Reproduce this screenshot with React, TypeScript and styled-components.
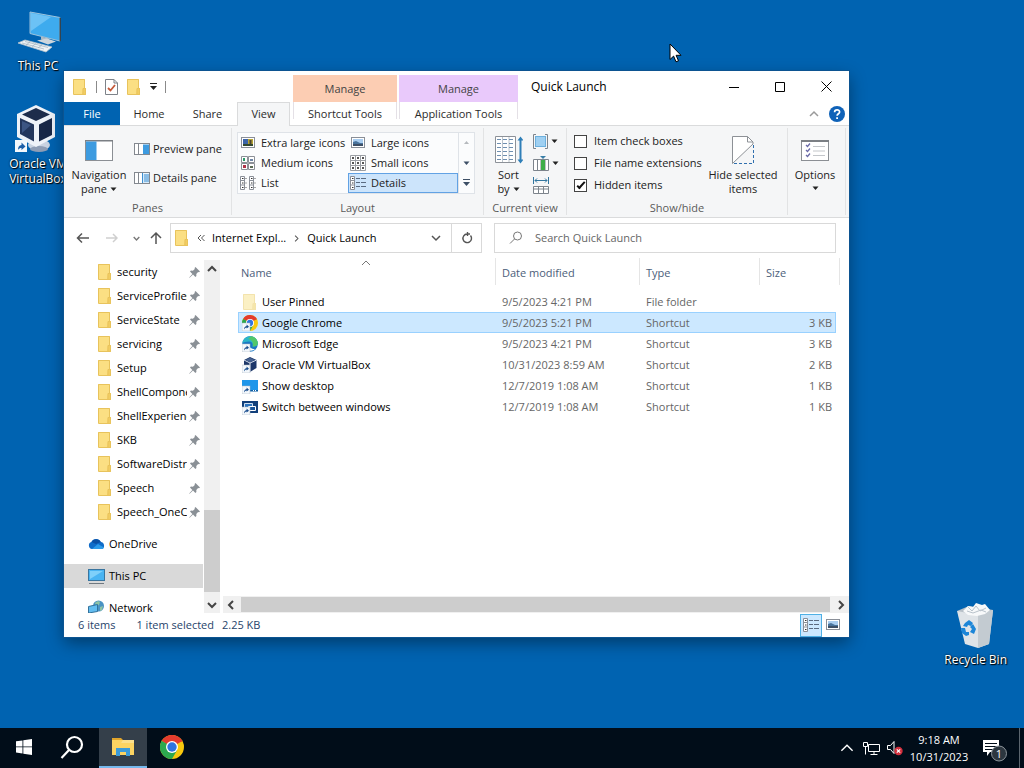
import React from "react";
import styled, { createGlobalStyle, css } from "styled-components";

const GlobalStyle = createGlobalStyle`
  *, *::before, *::after { box-sizing: border-box; }
  html, body { margin: 0; height: 100%; }
  body, button, input {
    font-family: "Open Sans", "Noto Sans", sans-serif;
    font-size: 11px;
    line-height: 16px;
  }
  svg { display: block; flex: none; }
  button { border: 0; padding: 0; margin: 0; background: none; color: inherit; white-space: nowrap; }
`;

/* ---------- desktop ---------- */

const Screen = styled.div`
  display: flex;
  flex-direction: column;
  height: 100vh;
  background: #0063b1;
  overflow: hidden;
`;

const Desktop = styled.main`
  position: relative;
  flex: 1;
  min-height: 0;
`;

const IconColumn = styled.div`
  display: flex;
  flex-direction: column;
  gap: 31px;
  width: 76px;
  padding-top: 8px;
`;

const DesktopIcon = styled.button`
  display: flex;
  flex-direction: column;
  align-items: center;
  gap: 2px;
  color: #fff;
  font-size: 12px;
  line-height: 15px;
  text-shadow: 1px 1px 1px #000, 0 0 2px #000;
`;

const BinSpot = styled.div`
  position: absolute;
  right: 17px;
  bottom: 61px;
`;

const Pointer = styled.div`
  position: absolute;
  left: 669px;
  top: 43px;
`;

/* ---------- window ---------- */

const Window = styled.section`
  position: absolute;
  left: 64px;
  top: 71px;
  right: 175px;
  bottom: 91px;
  display: flex;
  flex-direction: column;
  background: #fff;
  color: #000;
  box-shadow: 0 0 0 1px #0c5491, 0 6px 16px rgba(0, 0, 0, 0.4);
`;

const TitleBar = styled.header`
  display: flex;
  height: 31px;
  align-items: stretch;
`;

const QuickAccess = styled.div`
  display: flex;
  align-items: center;
  gap: 8px;
  width: 229px;
  padding-left: 8px;
`;

const QuickDivider = styled.span`
  width: 1px;
  height: 12px;
  background: #8a8a8a;
`;

const ContextLabel = styled.div<{ $tone: string; $width: number }>`
  width: ${(p) => p.$width}px;
  margin-top: 4px;
  margin-right: 2px;
  padding-top: 6px;
  background: ${(p) => p.$tone};
  color: #444;
  text-align: center;
`;

const WindowTitle = styled.h1`
  flex: 1;
  margin: 0;
  padding: 8px 0 0 11px;
  font-size: 12px;
  font-weight: 400;
`;

const CaptionButton = styled.button`
  display: flex;
  width: 46px;
  align-items: center;
  justify-content: center;
`;

const TabRow = styled.nav`
  display: flex;
  height: 24px;
  border-bottom: 1px solid #dadbdc;
`;

const Tab = styled.button<{ $width: number; $kind?: "file" | "active" | "context" }>`
  width: ${(p) => p.$width}px;
  height: 23px;
  padding-top: 1px;
  color: #2b2b2b;
  ${(p) =>
    p.$kind === "file" &&
    css`
      background: #0063b1;
      color: #fff;
    `}
  ${(p) =>
    p.$kind === "active" &&
    css`
      height: 24px;
      padding: 0 0 1px;
      margin-right: 3px;
      background: #f5f6f7;
      border: 1px solid #dadbdc;
      border-bottom: 0;
    `}
  ${(p) =>
    p.$kind === "context" &&
    css`
      margin-right: 2px;
      border: solid transparent;
      border-width: 0 1px;
      border-image: linear-gradient(#e4e0e6 70%, transparent 70%) 1;
    `}
`;

const TabTail = styled.div`
  display: flex;
  flex: 1;
  align-items: center;
  justify-content: flex-end;
  gap: 10px;
  padding-right: 4px;
`;

const Ribbon = styled.div`
  display: flex;
  height: 92px;
  background: #f5f6f7;
  border-bottom: 1px solid #dadbdc;
  color: #222;
`;

const Group = styled.section<{ $width: number }>`
  display: flex;
  flex-direction: column;
  width: ${(p) => p.$width}px;
  margin: 2px 0;
  border-right: 1px solid #e2e3e4;
`;

const GroupBody = styled.div`
  display: flex;
  flex: 1;
`;

const GroupName = styled.div`
  height: 14px;
  color: #5a5a5a;
  text-align: center;
  line-height: 14px;
`;

const BigButton = styled.button<{ $width: number }>`
  display: flex;
  flex-direction: column;
  align-items: center;
  width: ${(p) => p.$width}px;
  line-height: 14px;
  padding-top: 4px;
`;

const BigGlyph = styled.span`
  display: flex;
  height: 36px;
  align-items: center;
`;

const WithArrow = styled.span`
  display: flex;
  align-items: center;
  gap: 3px;
  min-height: 12px;
`;

const Stack = styled.div<{ $gap: number; $pad: number }>`
  display: flex;
  flex: none;
  flex-direction: column;
  gap: ${(p) => p.$gap}px;
  padding-top: ${(p) => p.$pad}px;
`;

const SmallButton = styled.button`
  display: flex;
  align-items: center;
  gap: 3px;
  height: 16px;
`;

const Gallery = styled.div`
  display: grid;
  grid-template-columns: 110px 110px 16px;
  grid-template-rows: repeat(3, 20px);
  margin: 4px 0 0 5px;
  height: 62px;
  border: 1px solid #dfe3e8;
  background: #fbfcfd;
`;

const GalleryItem = styled.button<{ $on?: boolean }>`
  display: flex;
  align-items: center;
  gap: 5px;
  padding-left: 1px;
  border: 1px solid ${(p) => (p.$on ? "#62a2e4" : "transparent")};
  background: ${(p) => (p.$on ? "#cce4fb" : "transparent")};
`;

const GalleryStep = styled.button`
  display: flex;
  align-items: center;
  justify-content: center;
  border-left: 1px solid #dfe3e8;
`;

const CheckLabel = styled.label`
  display: flex;
  width: 135px;
  align-items: center;
  gap: 7px;
  height: 16px;
  padding-left: 7px;
  white-space: nowrap;
`;

const CheckBox = styled.input`
  appearance: none;
  position: relative;
  flex: none;
  width: 13px;
  height: 13px;
  margin: 0;
  border: 1px solid #444;
  background: #fff;
  &:checked::after {
    content: "";
    position: absolute;
    left: 4px;
    top: 0;
    width: 4px;
    height: 9px;
    border: solid #111;
    border-width: 0 2px 2px 0;
    transform: rotate(42deg);
  }
`;

/* ---------- address row ---------- */

const AddressRow = styled.div`
  display: flex;
  align-items: center;
  height: 40px;
  padding: 0 13px;
`;

const NavButton = styled.button<{ $width: number }>`
  display: flex;
  width: ${(p) => p.$width}px;
  flex: none;
  justify-content: center;
`;

const AddressBox = styled.div`
  display: flex;
  flex: 1 1 312px;
  min-width: 0;
  align-items: center;
  height: 30px;
  margin-right: 12px;
  border: 1px solid #d9d9d9;
  padding-left: 3px;
`;

const Crumb = styled.a`
  color: #000;
  text-decoration: none;
  white-space: nowrap;
`;

const CrumbMark = styled.span`
  display: flex;
  margin: 0 7px;
`;

const AddressEnd = styled.div`
  display: flex;
  height: 28px;
  margin-left: auto;
`;

const AddressButton = styled.button`
  display: flex;
  width: 30px;
  align-items: center;
  justify-content: center;
  & + & {
    border-left: 1px solid #d9d9d9;
  }
`;

const SearchBox = styled.label`
  display: flex;
  flex: 1 1 342px;
  min-width: 0;
  align-items: center;
  gap: 12px;
  height: 30px;
  padding-left: 14px;
  border: 1px solid #d9d9d9;
`;

const SearchInput = styled.input`
  flex: 1;
  min-width: 0;
  padding: 0;
  border: 0;
  outline: 0;
  &::placeholder {
    color: #666;
    opacity: 1;
  }
`;

/* ---------- body ---------- */

const Body = styled.div`
  display: flex;
  flex: 1;
  min-height: 0;
`;

const Tree = styled.nav`
  width: 139px;
  padding-top: 2px;
  overflow: hidden;
`;

const TreeItem = styled.a<{ $root?: boolean; $on?: boolean }>`
  display: flex;
  align-items: center;
  gap: 4px;
  height: 24px;
  margin-top: ${(p) => (p.$root ? 8 : 0)}px;
  padding: 0 3px 0 ${(p) => (p.$root ? 24 : 33)}px;
  background: ${(p) => (p.$on ? "#d9d9d9" : "transparent")};
  color: #000;
  text-decoration: none;
`;

const TreeText = styled.span`
  flex: 1;
  margin-right: -2px;
  overflow: hidden;
  white-space: nowrap;
`;

const VScroll = styled.div`
  display: flex;
  flex-direction: column;
  width: 16px;
  margin: 2px 0 0 1px;
  background: #f0f0f0;
`;

const ScrollButton = styled.button`
  display: flex;
  width: 16px;
  height: 17px;
  align-items: center;
  justify-content: center;
`;

const VTrack = styled.div`
  display: flex;
  flex: 1;
  flex-direction: column;
  justify-content: flex-end;
  padding-bottom: 4px;
`;

const VThumb = styled.div`
  height: 26%;
  background: #cdcdcd;
`;

const ListPane = styled.div`
  display: flex;
  flex: 1;
  min-width: 0;
  flex-direction: column;
  margin-left: 3px;
`;

const ListArea = styled.div`
  flex: 1;
  min-height: 0;
  padding: 0 9px 0 15px;
`;

const FileTable = styled.table`
  width: 100%;
  border-spacing: 0;
  table-layout: fixed;
`;

const HeadCell = styled.th<{ $width?: number; $first?: boolean }>`
  position: relative;
  width: ${(p) => (p.$width ? `${p.$width}px` : "auto")};
  height: 27px;
  padding: ${(p) => (p.$first ? "3px 0 0 3px" : "3px 0 0 6px")};
  border-left: ${(p) => (p.$first ? "0" : "1px solid #e5e5e5")};
  color: #4c607a;
  font-weight: 400;
  text-align: left;
`;

const HeadEnd = styled.td`
  width: 4px;
  padding: 0;
  border-right: 1px solid #e5e5e5;
`;

const SortMark = styled.span`
  position: absolute;
  left: 48%;
  top: 0;
`;

const HeadGap = styled.tr`
  height: 6px;
`;

const Cell = styled.td<{ $right?: boolean }>`
  height: 21px;
  padding: 0 3px 0 7px;
  border: solid transparent;
  border-width: 1px 0;
  color: #666;
  line-height: 19px;
  text-align: ${(p) => (p.$right ? "right" : "left")};
  white-space: nowrap;
`;

const FileRow = styled.tr<{ $on?: boolean }>`
  ${Cell}:first-child {
    padding-left: 3px;
    border-left-width: 1px;
  }
  ${Cell}:nth-child(4) {
    border-right-width: 1px;
  }
  ${(p) =>
    p.$on &&
    css`
      ${Cell} {
        background: #cce8ff;
        border-color: #99d1ff;
      }
    `}
`;

const FileName = styled.span`
  display: flex;
  align-items: center;
  gap: 4px;
  color: #000;
`;

const HScroll = styled.div`
  display: flex;
  height: 17px;
  align-items: center;
  background: #f0f0f0;
`;

const HThumb = styled.div`
  flex: 1;
  height: 15px;
  background: #cdcdcd;
  margin: 0 3px 0 2px;
`;

const StatusBar = styled.footer`
  display: flex;
  height: 24px;
  align-items: center;
  padding: 0 5px 0 14px;
  color: #27436a;
`;

const StatusText = styled.span<{ $gap: number }>`
  margin-right: ${(p) => p.$gap}px;
`;

const ViewButton = styled.button<{ $on?: boolean }>`
  display: flex;
  width: 22px;
  height: 23px;
  align-items: center;
  justify-content: center;
  border: 1px solid ${(p) => (p.$on ? "#4fb0e5" : "transparent")};
  background: ${(p) => (p.$on ? "#cce8ff" : "transparent")};
`;

const Spacer = styled.div`
  flex: 1;
`;

/* ---------- taskbar ---------- */

const Taskbar = styled.footer`
  display: flex;
  height: 40px;
  background: #010d19;
  color: #fff;
`;

const TaskButton = styled.button<{ $on?: boolean }>`
  display: flex;
  width: 48px;
  align-items: center;
  justify-content: center;
  margin-left: ${(p) => (p.$on ? 3 : 0)}px;
  margin-right: ${(p) => (p.$on ? 1 : 0)}px;
  background: ${(p) => (p.$on ? "#343f4a" : "transparent")};
  border-bottom: 2px solid ${(p) => (p.$on ? "#76b9ed" : "transparent")};
`;

const TrayButton = styled.button`
  display: flex;
  width: 24px;
  align-items: center;
  justify-content: center;
`;

const Clock = styled.button`
  display: flex;
  flex-direction: column;
  width: 64px;
  align-items: center;
  justify-content: center;
  line-height: 17px;
`;

const NoticeButton = styled.button`
  display: flex;
  width: 48px;
  align-items: center;
  justify-content: center;
  padding-top: 4px;
`;

const ShowDesktop = styled.button`
  width: 5px;
  border-left: 1px solid #5b656e;
`;

/* ---------- drawings ---------- */

const Folder = ({ pale }: { pale?: boolean }) => (
  <svg width="16" height="16" viewBox="0 0 16 16">
    <path d="M1 0h12v15H1z" fill={pale ? "#fbf0c4" : "#fbdf83"} />
    <path d="M11 9h3v7h-4z" fill={pale ? "#f6e6a8" : "#f2cd62"} />
    <path d="M1.500 .5v15h12V9.500h-2.500v6M12.500 .5v9M1.500 .5h11" fill="none" stroke={pale ? "#f3e3ad" : "#e8c35c"} strokeWidth="1" />
  </svg>
);

const Chevron = ({ d, size = 10, color = "#444", weight = 1.5 }: { d: "up" | "down" | "left" | "right"; size?: number; color?: string; weight?: number }) => {
  const paths = { up: "M1 7l4-4 4 4", down: "M1 3l4 4 4-4", left: "M7 1L3 5l4 4", right: "M3 1l4 4-4 4" };
  return (
    <svg width={size} height={size} viewBox="0 0 10 10" fill="none" stroke={color} strokeWidth={weight}>
      <path d={paths[d]} />
    </svg>
  );
};

const Triangle = ({ up, bar, color = "#222" }: { up?: boolean; bar?: boolean; color?: string }) => (
  <svg width="7" height="8" viewBox="0 0 7 8" fill={color}>
    {bar && <path d="M0 0h7v1H0z" />}
    <path d={up ? "M1 5h5L3.500 2z" : bar ? "M0 3h7L3.500 7z" : "M.5 2.500h6L3.500 6z"} />
  </svg>
);

const CheckDoc = () => (
  <svg width="13" height="16" viewBox="0 0 13 16">
    <path d="M.5.5h8.500l3.500 3.500v11.500H.5z" fill="#fff" stroke="#7d8289" />
    <path d="M9 .5V4h3.500" fill="none" stroke="#7d8289" />
    <path d="M3 9l2.500 2.500L10 6" fill="none" stroke="#c4593a" strokeWidth="1.800" />
  </svg>
);

const NavPaneIcon = () => (
  <svg width="28" height="21" viewBox="0 0 28 21">
    <rect x=".5" y=".5" width="27" height="20" fill="#fff" stroke="#8b8f94" />
    <path d="M0 .5h28" stroke="#7b7f84" strokeWidth="2" />
    <path d="M1 1.500h10.500V20H1z" fill="#3d9be0" />
  </svg>
);

const SidePane = ({ lines }: { lines?: boolean }) => (
  <svg width="16" height="12" viewBox="0 0 16 12">
    <rect x=".5" y=".5" width="15" height="11" fill="#fff" stroke="#83888f" />
    <path d="M0 .5h16M4.500 1v10" stroke="#83888f" />
    <path d="M9 1.500h6V11H9z" fill={lines ? "#d9ecfb" : "#3d9be0"} />
    {lines && <path d="M10 3h5M10 5h5M10 7h5M10 9h5M8.500 1v10" stroke="#3d8fd0" />}
  </svg>
);

const PictureIcon = ({ vivid }: { vivid?: boolean }) => (
  <svg width="16" height="14" viewBox="0 0 16 14">
    <rect x="1.500" y="1.500" width="13" height="10" fill="#fff" stroke="#8a8f98" />
    <path d="M3 3h10v7H3z" fill={vivid ? "#3c64a8" : "#a9cdf0"} />
    <path d={vivid ? "M8 3h5v6H8z" : "M3 6l3-1 4 2 3 0v3H3z"} fill={vivid ? "#b7a534" : "#49739c"} />
    <path d="M3 8h10v2H3z" fill={vivid ? "#33482f" : "#3d4f66"} />
    {vivid && <path d="M9.500 4h2v4h-2z" fill="#4d4430" />}
  </svg>
);

const MediumIcon = () => (
  <svg width="16" height="14" viewBox="0 0 16 14">
    <path d="M1.500.5h6v6h-6zM8.500.5h6v6h-6zM1.500 7.500h6v6h-6zM8.500 7.500h6v6h-6z" fill="#fff" stroke="#8c9097" />
    <path d="M3 2h2v3H3z" fill="#2d9a6a" />
    <path d="M10 3h3v2h-3z" fill="#6f86a6" />
    <path d="M3 9h3v3H3z" fill="#b0344a" />
    <path d="M10 10h3v2h-3z" fill="#5b6b57" />
  </svg>
);

const SmallGrid = () => (
  <svg width="16" height="16" viewBox="0 0 16 16">
    <path d="M.5.5h15v15H.5zM5.500.5v15M10.500.5v15M.5 5.500h15M.5 10.500h15" fill="#fff" stroke="#9a9ea4" />
    <path d="M2 3h2M7 3h2M12 3h2M2 8h2M7 8h2M12 8h2M2 13h2M7 13h2M12 13h2" stroke="#555" strokeWidth="2" />
  </svg>
);

const ListIcon = ({ details }: { details?: boolean }) => (
  <svg width="16" height="14" viewBox="0 0 16 14">
    <path d="M.5.5h4v13h-4zM.5 4.500h4M.5 9h4" fill="#fff" stroke="#8a8f98" />
    <path d="M2 2.500h1.500M2 7h1.500M2 11.500h1.500" stroke="#333" />
    {details ? (
      <path d="M6 2.500h4M11 2.500h5M6 6.500h4M11 6.500h5M6 10.500h4M11 10.500h5" stroke="#5a6a80" />
    ) : (
      <>
        <path d="M5.500 2.500h1M5.500 7h1M5.500 11.500h1M14.500 2.500h1M14.500 7h1M14.500 11.500h1" stroke="#555" />
        <path d="M9.500.5h4v13h-4zM9.500 4.500h4M9.500 9h4" fill="#fff" stroke="#8a8f98" />
        <path d="M11 2.500h1.500M11 7h1.500M11 11.500h1.500" stroke="#333" />
      </>
    )}
  </svg>
);

const SortIcon = () => (
  <svg width="28" height="28" viewBox="0 0 28 28">
    <path d="M.5.5h20v26H.5z" fill="#fff" stroke="#8c9198" />
    <path d="M7.500 1v25M14 1v25" stroke="#bcc4cc" />
    <path d="M2 3.500h17M2 7.500h17M2 11.500h17M2 15.500h17M2 19.500h17M2 23.500h17" stroke="#6f8fb0" strokeDasharray="4 2" />
    <path d="M25.500 3v22" stroke="#2f7fb8" strokeWidth="2" />
    <path d="M22.500 4.500l3-4 3 4zM22.500 23.500l3 4 3-4z" fill="#2f7fb8" />
  </svg>
);

const GroupByIcon = () => (
  <svg width="15" height="15" viewBox="0 0 15 15">
    <path d="M3 .5H.5v14H3M12 .5h2.500v14H12" fill="none" stroke="#7d848c" />
    <rect x="2.500" y="2.500" width="10" height="10" fill="#9fd0f2" stroke="#6db0dd" />
  </svg>
);

const AddColumnIcon = () => (
  <svg width="16" height="16" viewBox="0 0 16 16">
    <path d="M.5 4.500h15v11H.5zM4.500 4.500v11M8 4.500v11M12 4.500v11" fill="#fff" stroke="#7d848c" />
    <path d="M8 5h4v10H8z" fill="#3fae49" />
    <path d="M7 1h6l-3 3z" fill="#3a7fa8" />
  </svg>
);

const SizeColumnsIcon = () => (
  <svg width="16" height="17" viewBox="0 0 16 17">
    <path d="M.5 9.500h15v7H.5zM.5 12h15M5.500 9.500v7M10.500 9.500v7" fill="#fff" stroke="#7d848c" />
    <path d="M.5 0v7M15.500 0v7M2 3.500h12M4 1.500l-2 2 2 2M12 1.500l2 2-2 2" fill="none" stroke="#33769f" />
  </svg>
);

const HideIcon = () => (
  <svg width="22" height="28" viewBox="0 0 22 28">
    <path d="M.5 27.500V.5h15l5.500 5.500v2L.5 27.500" fill="#fff" stroke="#8d9196" />
    <path d="M15.500.5V6H21" fill="none" stroke="#8d9196" />
    <path d="M21.500 9v18.500H1" fill="none" stroke="#2f6fae" strokeDasharray="3 2" />
  </svg>
);

const OptionsIcon = () => (
  <svg width="28" height="21" viewBox="0 0 28 21">
    <rect x=".5" y=".5" width="27" height="20" fill="#fff" stroke="#8b8f94" />
    <path d="M0 1h28" stroke="#7b7f84" strokeWidth="2" />
    <path d="M5 5l1.500 1.500L9 3.500M5 10l1.500 1.500L9 8.500M5 15l1.500 1.500L9 13.500" fill="none" stroke="#6a6aa8" strokeWidth="1.300" />
    <path d="M12 6.500h12M12 11h12M12 15.500h12" stroke="#c3c6ca" />
  </svg>
);

const Pin = () => (
  <svg width="11" height="11" viewBox="0 0 11 11" fill="#8a9096">
    <path d="M6.500 0L11 4.500l-1 .8-.9-.2L7.300 7l.1 2-1 .9L4 7.600.6 10.800l-.4-.4L3.400 7 1 4.600l.9-1 2 .1L5.800 1.900 5.600 1z" />
  </svg>
);

const Cloud = () => (
  <svg width="17" height="16" viewBox="0 0 17 16">
    <path d="M4 13a3.600 3.600 0 0 1-.6-7A5.200 5.200 0 0 1 12.800 6a3.600 3.600 0 0 1 .8 7z" fill="#0f6cc9" />
    <path d="M3.500 6A5.200 5.200 0 0 1 12.800 6L8 8z" fill="#0a4fa3" />
    <path d="M4 13l6-5 6 3.500c-.5 1-1.400 1.500-2.400 1.500z" fill="#2d9bea" />
  </svg>
);

const Monitor = () => (
  <svg width="17" height="16" viewBox="0 0 17 16">
    <rect x=".5" y="1.500" width="16" height="11" fill="#4ab4f2" stroke="#39759f" />
    <path d="M2 3h13L2 11z" fill="#7fd0fa" />
    <path d="M1 15.500h15" stroke="#6f7880" />
  </svg>
);

const NetworkIcon = () => (
  <svg width="17" height="16" viewBox="0 0 17 16">
    <circle cx="10.500" cy="6" r="5.500" fill="#4a93c4" />
    <path d="M7 3c2-2 4-2 5-1l-1 3-3 1zM12 7l3-1-1 4-2 1z" fill="#8fc3a4" />
    <path d="M.5 6.500l9-2v7l-9 1.500z" fill="#62bdf0" stroke="#33729c" />
    <path d="M2 15l8-1.500" stroke="#777" />
  </svg>
);

const ShortcutArrow = () => (
  <>
    <rect x="0" y="8" width="8" height="8" fill="#f4f8fc" stroke="#aab6c2" strokeWidth=".5" />
    <path d="M2 14.500c0-2 .8-3.200 2.600-3.600V9.500L7 11.700 4.600 13.500V12.400C3.200 12.600 2.500 13.500 2 14.500z" fill="#1c4f8f" />
  </>
);

const ChromeShapes = () => (
  <>
    <circle cx="12" cy="12" r="12" fill="#f9c80e" />
    <path d="M12 12L1.600 6A12 12 0 0 1 22.400 6z" fill="#e33b2e" />
    <path d="M1.600 6A12 12 0 0 0 12 24l5.200-9z" fill="#2da94f" />
    <path d="M1.600 6L7 15l5-3z" fill="#2da94f" />
    <path d="M12 6.500h10.600L22.400 6H12L6 9z" fill="#e33b2e" />
    <circle cx="12" cy="12" r="6" fill="#fff" />
    <circle cx="12" cy="12" r="4.700" fill="#2f74e0" />
  </>
);

const ChromeIcon = () => (
  <svg width="24" height="24" viewBox="0 0 24 24">
    <ChromeShapes />
  </svg>
);

const FileIcon = ({ kind }: { kind: string }) => {
  if (kind === "folder") return <Folder pale />;
  return (
    <svg width="16" height="16" viewBox="0 0 16 16">
      {kind === "chrome" && (
        <svg width="16" height="16" viewBox="0 0 24 24">
          <ChromeShapes />
        </svg>
      )}
      {kind === "edge" && (
        <>
          <circle cx="8" cy="8" r="7.800" fill="#1b78c4" />
          <path d="M.3 7C1.500 2 5 0 8.500.2 13 .5 16 4 15.800 7.500 15.500 10 13 11 10.500 10.400 11.500 8 10 5.500 7 5.500 4 5.500 1.500 6.500.3 7z" fill="#2cb6c8" />
          <path d="M9 .3c4 .3 7 3.500 6.800 7.200C15.500 10 13 11 10.500 10.400 11.500 8 11 4 6 3z" fill="#52c76a" />
          <path d="M7 8c0 3 2 5 6 5-2 2-5 2-7 1z" fill="#fff" />
        </>
      )}
      {kind === "vbox" && (
        <>
          <path d="M8 0l6.500 3v8L8 15l-6-4V3z" fill="#1d3769" />
          <path d="M2 3l6 3 6.500-3M8 6v9" fill="none" stroke="#dfe6f1" />
          <path d="M8 .8L13 3 8 5.200 3.500 3z" fill="#45608f" />
        </>
      )}
      {kind === "desktop" && (
        <>
          <path d="M0 2h16v11H0z" fill="#1e96ea" />
          <path d="M0 12h16v1.500H0z" fill="#0b5ea6" />
          <path d="M11 12h1v1h-1zM13 12h1v1h-1z" fill="#fff" />
        </>
      )}
      {kind === "switch" && (
        <>
          <path d="M0 2h16v12H0z" fill="#123f7a" />
          <path d="M2.500 4.500h8v5h-8z" fill="#2c73bd" stroke="#cfe0f2" />
          <path d="M6.500 7.500h7v4h-7z" fill="#19549a" stroke="#fff" />
        </>
      )}
      <ShortcutArrow />
    </svg>
  );
};

const ThisPcBig = () => (
  <svg width="48" height="48" viewBox="0 0 48 48">
    <path d="M16 4l30 5.500V33l-30-7.500z" fill="#3eabee" stroke="#9cc3dc" strokeWidth="1" />
    <path d="M17 5l20 4-20 14z" fill="#6cc2f5" />
    <path d="M45.500 9.500l1.500.5v23l-1.500.5z" fill="#35444f" />
    <path d="M27 28.500l8 2v3l-8-2z" fill="#aebbc5" />
    <path d="M23 32.500l10-2 9 3-8 3z" fill="#cdd6dd" />
    <path d="M4 35l7-3 27 7-6 5z" fill="#eef2f5" stroke="#b8c4ce" strokeWidth=".8" />
    <path d="M8 35l22 6M11 33.500l23 6M12 37l4-3M18 38.500l4-3M24 40l4-3" stroke="#9fb0bd" strokeWidth=".7" />
  </svg>
);

const VBoxBig = () => (
  <svg width="48" height="50" viewBox="0 0 48 50">
    <ellipse cx="25" cy="41" rx="11" ry="6" fill="#c9d3e2" />
    <ellipse cx="25" cy="45" rx="9" ry="3" fill="#8e9db5" />
    <path d="M22 1l19 9v23L22 43 3 33V10z" fill="#eef2f8" />
    <path d="M22 4l14 6.500L22 17 8 10.500z" fill="#1d2c4b" />
    <path d="M6 14l14 6.500v17L6 30z" fill="#23365c" />
    <path d="M38 14l-13 6.500v17L38 31z" fill="#182747" />
    <path d="M8 17l9 4-9 8z" fill="#3c5583" />
    <rect x="1" y="36" width="12" height="12" fill="#f4f8fc" />
    <path d="M4 46c0-3 1-4.500 3.500-5v-2.500l4 4-4 3.500v-2C6 44 5 44.500 4 46z" fill="#1d5fa8" />
  </svg>
);

const BinBig = () => (
  <svg width="48" height="48" viewBox="0 0 48 48">
    <path d="M5 9l36-1-4 34-11 4-13-4z" fill="#dfe4e8" />
    <path d="M26 13l15-5-4 34-11 4z" fill="#c3cbd1" />
    <path d="M5 9l12-5 24 4-15 5z" fill="#b7c0c8" />
    <path d="M11 9l5-5 5 1 3-4 6 2 3-1 5 6-5 4-8 2-9-1z" fill="#f7f9fa" />
    <path d="M16 5l4 4 4-5 4 5 6-3M15 9l6 2 8-3 5 2" fill="none" stroke="#b9c3cb" />
    <path d="M13 21l4-3 4 3-2 3-3-1-1 2-4-1zM21 22l3 5-2 5-4-2 2-3-2-2zM9 26l4 0 1 4h3v3l-3 1-4-3z" fill="#1c86d8" />
  </svg>
);

const Arrow = ({ up, flip, color }: { up?: boolean; flip?: boolean; color: string }) => (
  <svg width="14" height="14" viewBox="0 0 14 14" fill="none" stroke={color} strokeWidth="1.500">
    <path d={up ? "M8 13V2M3 7l5-5 5 5" : flip ? "M2 7h11M9 3l4 4-4 4" : "M13 7H2M6 2.500L1.500 7 6 11.500"} />
  </svg>
);

/* ---------- data ---------- */

const TREE = ["security", "ServiceProfiles", "ServiceState", "servicing", "Setup", "ShellComponents", "ShellExperiences", "SKB", "SoftwareDistribution", "Speech", "Speech_OneCore"];

const FILES = [
  { name: "User Pinned", date: "9/5/2023 4:21 PM", type: "File folder", size: "", kind: "folder" },
  { name: "Google Chrome", date: "9/5/2023 5:21 PM", type: "Shortcut", size: "3 KB", kind: "chrome", on: true },
  { name: "Microsoft Edge", date: "9/5/2023 4:21 PM", type: "Shortcut", size: "3 KB", kind: "edge" },
  { name: "Oracle VM VirtualBox", date: "10/31/2023 8:59 AM", type: "Shortcut", size: "2 KB", kind: "vbox" },
  { name: "Show desktop", date: "12/7/2019 1:08 AM", type: "Shortcut", size: "1 KB", kind: "desktop" },
  { name: "Switch between windows", date: "12/7/2019 1:08 AM", type: "Shortcut", size: "1 KB", kind: "switch" },
];

/* ---------- sections ---------- */

const CheckRow = ({ text, on }: { text: string; on?: boolean }) => (
  <CheckLabel>
    <CheckBox type="checkbox" defaultChecked={on} />
    {text}
  </CheckLabel>
);

const ExplorerRibbon = () => (
  <Ribbon>
    <Group $width={168}>
      <GroupBody>
        <BigButton $width={70}>
          <BigGlyph><NavPaneIcon /></BigGlyph>
          <span>Navigation</span>
          <WithArrow>pane <Triangle /></WithArrow>
        </BigButton>
        <Stack $gap={13} $pad={13}>
          <SmallButton><SidePane />Preview pane</SmallButton>
          <SmallButton><SidePane lines />Details pane</SmallButton>
        </Stack>
      </GroupBody>
      <GroupName>Panes</GroupName>
    </Group>
    <Group $width={252}>
      <GroupBody>
        <Gallery>
          <GalleryItem><PictureIcon vivid />Extra large icons</GalleryItem>
          <GalleryItem><PictureIcon />Large icons</GalleryItem>
          <GalleryStep aria-label="Previous"><Triangle up color="#b5b9bd" /></GalleryStep>
          <GalleryItem><MediumIcon />Medium icons</GalleryItem>
          <GalleryItem><SmallGrid />Small icons</GalleryItem>
          <GalleryStep aria-label="Next"><Triangle color="#3d4f66" /></GalleryStep>
          <GalleryItem><ListIcon />List</GalleryItem>
          <GalleryItem $on><ListIcon details />Details</GalleryItem>
          <GalleryStep aria-label="More"><Triangle bar color="#3d4f66" /></GalleryStep>
        </Gallery>
      </GroupBody>
      <GroupName>Layout</GroupName>
    </Group>
    <Group $width={83}>
      <GroupBody>
        <BigButton $width={49}>
          <BigGlyph><SortIcon /></BigGlyph>
          <span>Sort</span>
          <WithArrow>by <Triangle /></WithArrow>
        </BigButton>
        <Stack $gap={6} $pad={5}>
          <SmallButton aria-label="Group by"><GroupByIcon /><Triangle /></SmallButton>
          <SmallButton aria-label="Add columns"><AddColumnIcon /><Triangle /></SmallButton>
          <SmallButton aria-label="Size all columns to fit"><SizeColumnsIcon /></SmallButton>
        </Stack>
      </GroupBody>
      <GroupName>Current view</GroupName>
    </Group>
    <Group $width={221}>
      <GroupBody>
        <Stack $gap={6} $pad={5}>
          <CheckRow text="Item check boxes" />
          <CheckRow text="File name extensions" />
          <CheckRow text="Hidden items" on />
        </Stack>
        <BigButton $width={82}>
          <BigGlyph><HideIcon /></BigGlyph>
          <span>Hide selected</span>
          <span>items</span>
        </BigButton>
      </GroupBody>
      <GroupName>Show/hide</GroupName>
    </Group>
    <Group $width={58}>
      <GroupBody>
        <BigButton $width={54}>
          <BigGlyph><OptionsIcon /></BigGlyph>
          <span>Options</span>
          <WithArrow><Triangle /></WithArrow>
        </BigButton>
      </GroupBody>
    </Group>
  </Ribbon>
);

const Explorer = () => (
  <Window>
    <TitleBar>
      <QuickAccess>
        <Folder />
        <QuickDivider />
        <CheckDoc />
        <Folder />
        <Triangle bar />
        <QuickDivider />
      </QuickAccess>
      <ContextLabel $tone="#fccdb3" $width={104}>Manage</ContextLabel>
      <ContextLabel $tone="#e9c9fb" $width={119}>Manage</ContextLabel>
      <WindowTitle>Quick Launch</WindowTitle>
      <CaptionButton aria-label="Minimize">
        <svg width="10" height="10" viewBox="0 0 10 10"><path d="M0 5.500h10" stroke="#000" /></svg>
      </CaptionButton>
      <CaptionButton aria-label="Maximize">
        <svg width="10" height="10" viewBox="0 0 10 10"><path d="M.5.5h9v9h-9z" fill="none" stroke="#000" /></svg>
      </CaptionButton>
      <CaptionButton aria-label="Close">
        <svg width="11" height="11" viewBox="0 0 11 11"><path d="M.5.5l10 10M10.500.5l-10 10" stroke="#000" /></svg>
      </CaptionButton>
    </TitleBar>
    <TabRow>
      <Tab $width={56} $kind="file">File</Tab>
      <Tab $width={58}>Home</Tab>
      <Tab $width={59}>Share</Tab>
      <Tab $width={53} $kind="active">View</Tab>
      <Tab $width={104} $kind="context">Shortcut Tools</Tab>
      <Tab $width={119} $kind="context">Application Tools</Tab>
      <TabTail>
        <Chevron d="up" color="#9a9a9a" />
        <svg width="16" height="16" viewBox="0 0 16 16">
          <circle cx="8" cy="8" r="8" fill="#0f62b8" />
          <path d="M5.600 6.200c0-3 5-3 5-.2 0 1.700-2.500 1.800-2.500 3.800" fill="none" stroke="#fff" strokeWidth="1.700" />
          <path d="M7.200 11.200H9V13H7.200z" fill="#fff" />
        </svg>
      </TabTail>
    </TabRow>
    <ExplorerRibbon />
    <AddressRow>
      <NavButton $width={12} aria-label="Back"><Arrow color="#555" /></NavButton>
      <NavButton $width={44} aria-label="Forward"><Arrow flip color="#cfcfcf" /></NavButton>
      <NavButton $width={7} aria-label="Recent"><Chevron d="down" size={7} color="#777" weight={2} /></NavButton>
      <NavButton $width={30} aria-label="Up"><Arrow up color="#555" /></NavButton>
      <AddressBox>
        <Folder />
        <CrumbMark>
          <svg width="8" height="8" viewBox="0 0 8 8" fill="none" stroke="#555"><path d="M4 1L1 4l3 3M7.500 1l-3 3 3 3" /></svg>
        </CrumbMark>
        <Crumb href="#ie">Internet Expl...</Crumb>
        <CrumbMark><Chevron d="right" size={7} color="#555" /></CrumbMark>
        <Crumb href="#ql">Quick Launch</Crumb>
        <AddressEnd>
          <AddressButton aria-label="History"><Chevron d="down" color="#555" /></AddressButton>
          <AddressButton aria-label="Refresh">
            <svg width="12" height="12" viewBox="0 0 12 12" fill="none" stroke="#555" strokeWidth="1.400">
              <path d="M9.500 3.500A4.300 4.300 0 1 1 6 2h3M6.500 0v4" />
            </svg>
          </AddressButton>
        </AddressEnd>
      </AddressBox>
      <SearchBox>
        <svg width="14" height="14" viewBox="0 0 14 14" fill="none" stroke="#777">
          <circle cx="8.500" cy="5" r="4" />
          <path d="M5.500 8L1 12.500" />
        </svg>
        <SearchInput aria-label="Search" placeholder="Search Quick Launch" />
      </SearchBox>
    </AddressRow>
    <Body>
      <Tree>
        {TREE.map((t) => (
          <TreeItem key={t} href="#folder"><Folder /><TreeText>{t}</TreeText><Pin /></TreeItem>
        ))}
        <TreeItem href="#onedrive" $root><Cloud />OneDrive</TreeItem>
        <TreeItem href="#pc" $root $on><Monitor />This PC</TreeItem>
        <TreeItem href="#network" $root><NetworkIcon />Network</TreeItem>
      </Tree>
      <VScroll>
        <ScrollButton aria-label="Scroll up"><Chevron d="up" weight={2} /></ScrollButton>
        <VTrack><VThumb /></VTrack>
        <ScrollButton aria-label="Scroll down"><Chevron d="down" weight={2} /></ScrollButton>
      </VScroll>
      <ListPane>
        <ListArea>
          <FileTable>
            <thead>
              <tr>
                <HeadCell $first>Name<SortMark><Chevron d="up" color="#777" weight={1} /></SortMark></HeadCell>
                <HeadCell $width={144}>Date modified</HeadCell>
                <HeadCell $width={120}>Type</HeadCell>
                <HeadCell $width={77}>Size</HeadCell>
                <HeadEnd />
              </tr>
            </thead>
            <tbody>
              <HeadGap />
              {FILES.map((f) => (
                <FileRow key={f.name} $on={f.on}>
                  <Cell><FileName><FileIcon kind={f.kind} />{f.name}</FileName></Cell>
                  <Cell>{f.date}</Cell>
                  <Cell>{f.type}</Cell>
                  <Cell $right>{f.size}</Cell>
                </FileRow>
              ))}
            </tbody>
          </FileTable>
        </ListArea>
        <HScroll>
          <ScrollButton aria-label="Scroll left"><Chevron d="left" weight={2} /></ScrollButton>
          <HThumb />
          <ScrollButton aria-label="Scroll right"><Chevron d="right" weight={2} /></ScrollButton>
        </HScroll>
      </ListPane>
    </Body>
    <StatusBar>
      <StatusText $gap={21}>6 items</StatusText>
      <StatusText $gap={8}>1 item selected</StatusText>
      <StatusText $gap={0}>2.25 KB</StatusText>
      <Spacer />
      <ViewButton $on aria-label="Details view"><ListIcon details /></ViewButton>
      <ViewButton aria-label="Thumbnail view"><PictureIcon /></ViewButton>
    </StatusBar>
  </Window>
);

export default function App() {
  return (
    <Screen>
      <GlobalStyle />
      <Desktop>
        <IconColumn>
          <DesktopIcon><ThisPcBig />This PC</DesktopIcon>
          <DesktopIcon><VBoxBig /><span>Oracle VM<br />VirtualBox</span></DesktopIcon>
        </IconColumn>
        <BinSpot>
          <DesktopIcon><BinBig />Recycle Bin</DesktopIcon>
        </BinSpot>
        <Explorer />
        <Pointer>
          <svg width="13" height="20" viewBox="0 0 13 20">
            <path d="M1 1v15.500l3.600-3.400L7 18.800l2.500-1-2.400-5.500H12z" fill="#fff" stroke="#000" />
          </svg>
        </Pointer>
      </Desktop>
      <Taskbar>
        <TaskButton aria-label="Start">
          <svg width="16" height="16" viewBox="0 0 16 16" fill="#fff">
            <path d="M0 2.300L6.500 1.400v6.100H0zM7.300 1.300L16 0v7.500H7.300zM0 8.300h6.500v6.200L0 13.600zM7.300 8.300H16V16l-8.700-1.300z" />
          </svg>
        </TaskButton>
        <TaskButton aria-label="Search">
          <svg width="24" height="24" viewBox="0 0 24 24" fill="none" stroke="#fff" strokeWidth="2.200">
            <circle cx="14.500" cy="9.500" r="7.500" />
            <path d="M9 15l-7.500 8" />
          </svg>
        </TaskButton>
        <TaskButton $on aria-label="File Explorer">
          <svg width="22" height="20" viewBox="0 0 22 20">
            <path d="M0 1h9l2 2h-9v4H0z" fill="#e0a52c" />
            <path d="M0 3h22v15H0z" fill="#fcd462" />
            <path d="M11 3h11v3H9z" fill="#fbe08d" />
            <path d="M4 19v-8h14v8h-4v-4H8v4z" fill="#3c9bd8" />
          </svg>
        </TaskButton>
        <TaskButton aria-label="Google Chrome"><ChromeIcon /></TaskButton>
        <Spacer />
        <TrayButton aria-label="Hidden icons"><Chevron d="up" size={14} color="#fff" weight={1} /></TrayButton>
        <TrayButton aria-label="Network">
          <svg width="17" height="15" viewBox="0 0 17 15" fill="none" stroke="#fff">
            <path d="M5.500 3.500h11v7h-11zM11 10.500v3M7.500 13.500h7M.5 1.500h4v4h-4zM2.500 5.500v8" />
          </svg>
        </TrayButton>
        <TrayButton aria-label="Volume">
          <svg width="16" height="16" viewBox="0 0 16 16">
            <path d="M.5 5.500h3l3.500-4v12l-3.500-4h-3z" fill="none" stroke="#fff" />
            <circle cx="11.500" cy="11" r="4.200" fill="#d32f3d" />
            <path d="M9.800 9.300l3.400 3.400M13.200 9.300l-3.400 3.400" stroke="#fff" strokeWidth="1.200" />
          </svg>
        </TrayButton>
        <Clock><span>9:18 AM</span><span>10/31/2023</span></Clock>
        <NoticeButton aria-label="Notifications">
          <svg width="24" height="24" viewBox="0 0 24 24">
            <path d="M0 2h16v12H7l-3 4v-4H0z" fill="#fff" />
            <path d="M2 5.500h12M2 8.500h12M2 11.500h8" stroke="#010d19" />
            <circle cx="16" cy="15.500" r="7.500" fill="#2c363f" stroke="#8d959c" />
            <text x="16" y="19.500" fill="#fff" fontSize="11" textAnchor="middle">1</text>
          </svg>
        </NoticeButton>
        <ShowDesktop aria-label="Show desktop" />
      </Taskbar>
    </Screen>
  );
}
